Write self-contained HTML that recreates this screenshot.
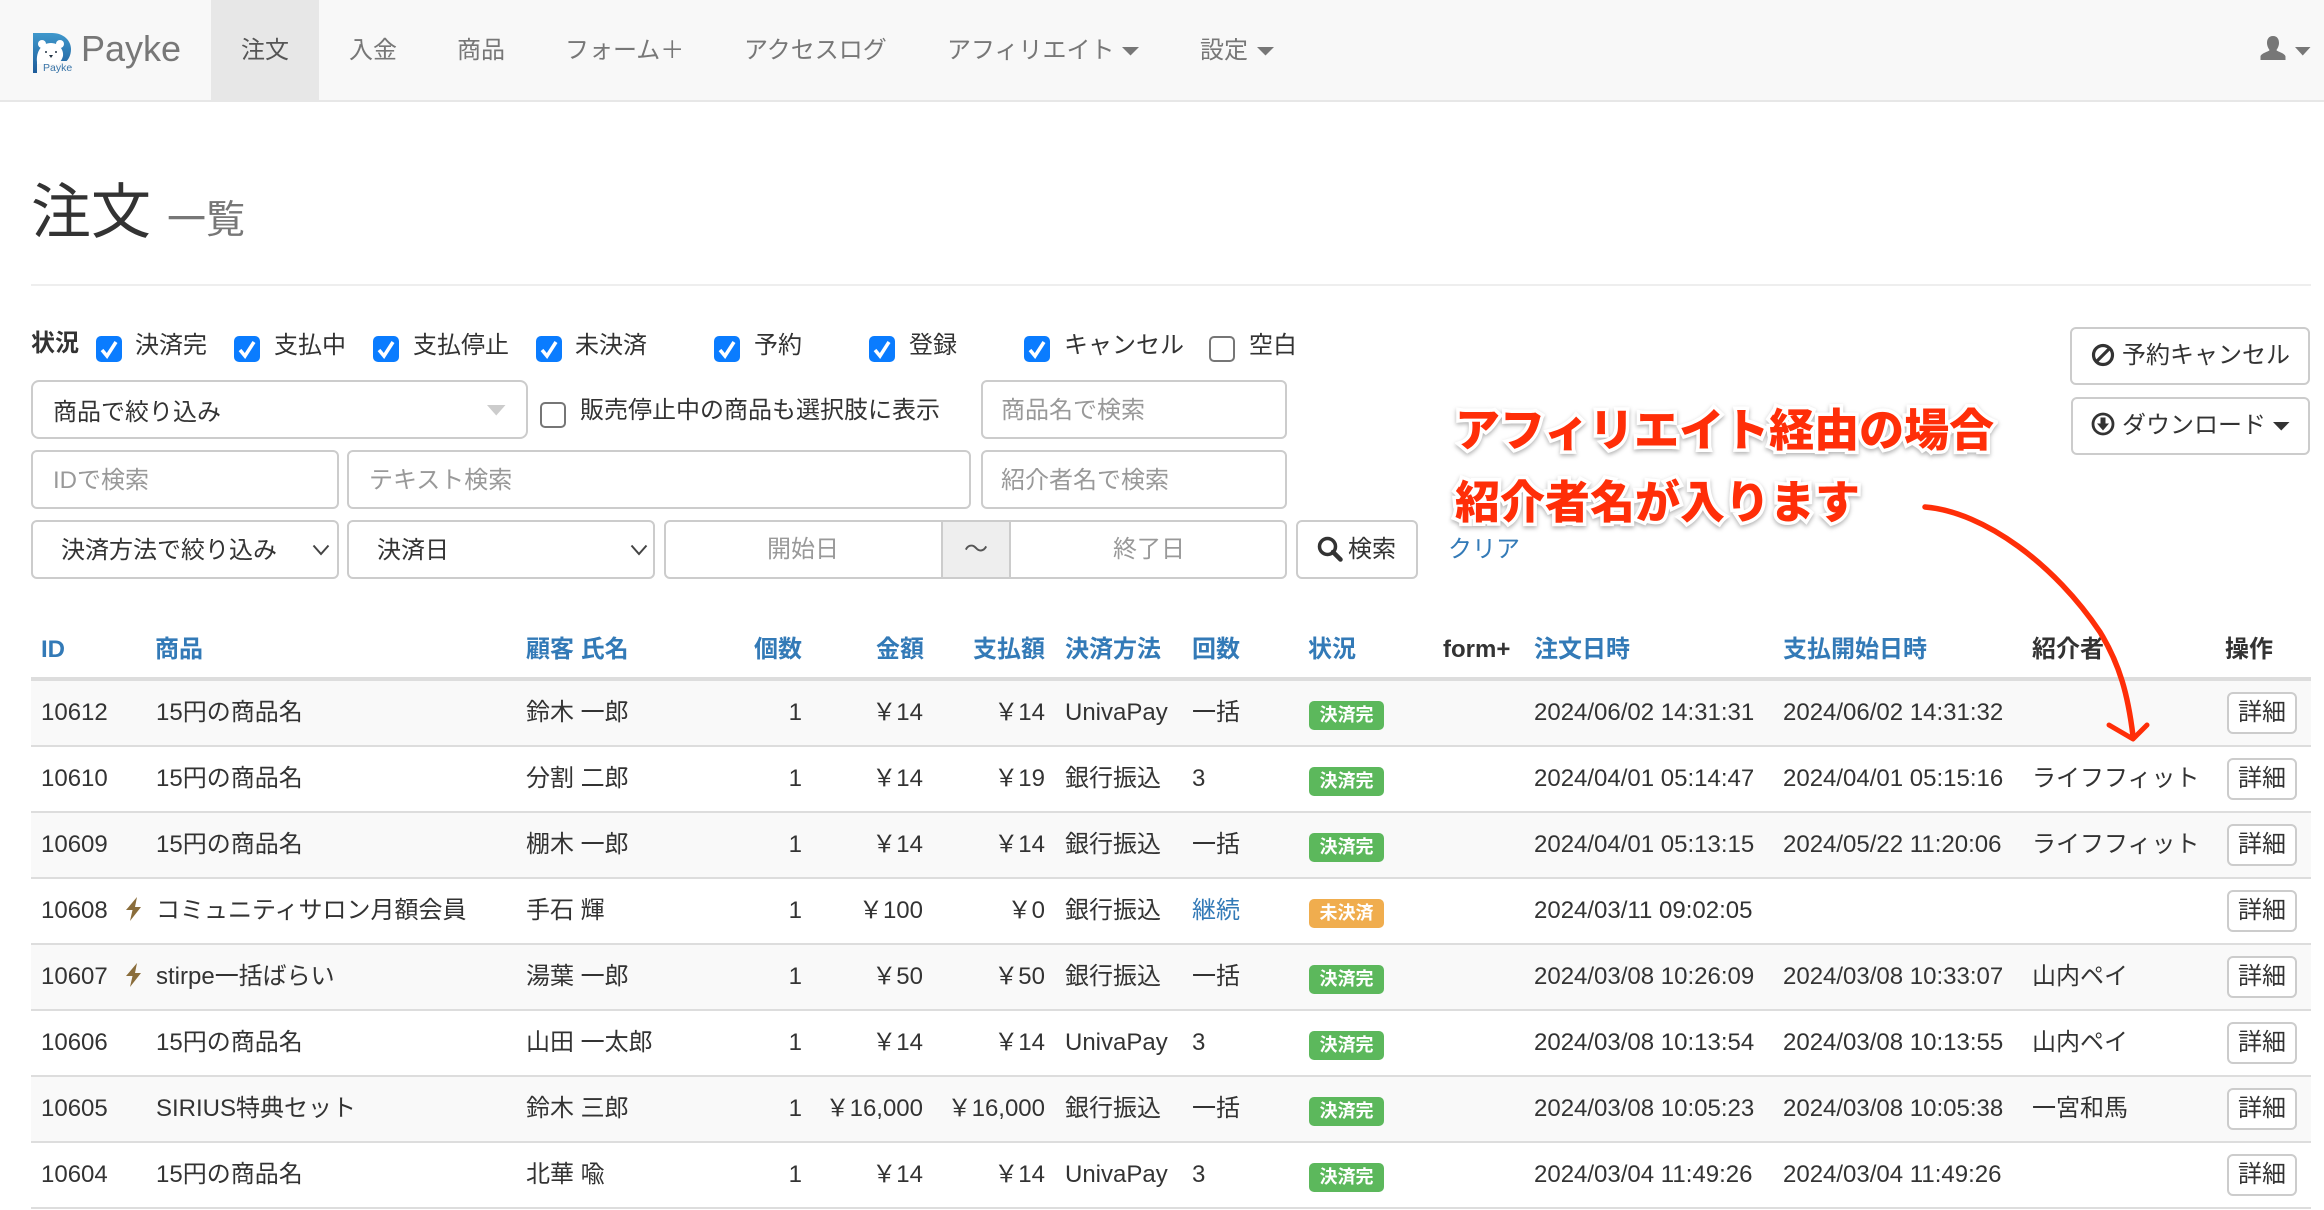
<!DOCTYPE html>
<html lang="ja">
<head>
<meta charset="utf-8">
<title>注文 一覧</title>
<style>
html,body{margin:0;padding:0;background:#fff}
body{width:2324px;height:1210px;position:relative;overflow:hidden;color:#333;font:24px/34px "Liberation Sans","Noto Sans CJK JP",sans-serif}
.t{position:absolute;white-space:nowrap;line-height:34px;margin:2px 0 0 -1px}
.b{position:absolute;box-sizing:border-box;border:2px solid #ccc;background:#fff;border-radius:6px}
.ph{color:#999}
.nav{position:absolute;left:0;top:0;width:2324px;height:102px;box-sizing:border-box;background:#f8f8f8;border-bottom:2px solid #e7e7e7}
.nav .t{color:#777;top:32px}
.th{font-weight:700;color:#337ab7;top:631px}
.th.k{color:#333}
.lb{top:327px;color:#333}
.cb{position:absolute;width:26px;height:26px;border-radius:5px;box-sizing:border-box}
.cb.on{background:#0a7cff}
.cb.off{background:#fff;border:2px solid #767676}
.cb svg{position:absolute;left:0;top:0}
.r{position:absolute;left:31px;width:2280px;height:64px;border-bottom:2px solid #ddd;box-sizing:content-box}
.r.s{background:#f9f9f9}
.r span{position:absolute;top:0;line-height:63px;white-space:nowrap}
.c1{left:10px}.c2{left:125px}.c3{left:495px}
.c4{right:1509px}.c5{right:1388px}.c6{right:1266px}
.c7{left:1034px}.c8{left:1161px}
.c10{left:1503px}.c11{left:1752px}.c12{left:2001px}
.r span.bd{left:1278px;top:20px;width:75px;height:29px;line-height:29px;border-radius:5px;background:#5cb85c;color:#fff;font-size:18px;font-weight:700;text-align:center}
.r span.bd.w{background:#f0ad4e}
.r span.dt{left:2196px;top:11px;width:70px;height:42px;line-height:38px;box-sizing:border-box;border:2px solid #ccc;border-radius:6px;background:#fff;text-align:center}
.bolt{position:absolute;left:94px;top:18px}
.note{position:absolute;left:1455px;white-space:nowrap;font:900 45px/60px "Liberation Sans","Noto Sans CJK JP",sans-serif;color:#ff2e08;-webkit-text-stroke:7px #fff;paint-order:stroke fill;filter:drop-shadow(0 2px 2px rgba(0,0,0,.3))}
</style>
</head>
<body>

<div class="nav">
  <div style="position:absolute;left:211px;top:0;width:108px;height:100px;background:#e7e7e7"></div>
  <svg style="position:absolute;left:33px;top:33px" width="39" height="41" viewBox="0 0 39 41">
    <defs><linearGradient id="g" x1="0" y1="0" x2="0" y2="1"><stop offset="0" stop-color="#3f98cc"/><stop offset="1" stop-color="#1e5c9a"/></linearGradient></defs>
    <path d="M0 0H19C31 0 38 8 38 16C38 23 35 28 30 31H4V40L0 40Z" fill="url(#g)"/>
    <path d="M4 28H38V40H4Z" fill="#f8f8f8"/>
    <circle cx="9" cy="11" r="4" fill="#fff"/><circle cx="27" cy="11" r="4" fill="#fff"/>
    <path d="M4 29C3 18 9 10 18 10C26 10 31 17 30 23C29 27 27 29 25 31H4Z" fill="#fff"/>
    <circle cx="13" cy="19" r="1" fill="#234"/><circle cx="23" cy="19" r="1" fill="#234"/>
    <path d="M16 22H20L18 25Z" fill="#234"/>
    <text x="10" y="38" font-size="10.5" fill="#3a75a8" font-family="Liberation Sans">Payke</text>
  </svg>
  <div class="t" style="left:82px;top:29px;font-size:36px;line-height:36px;color:#777">Payke</div>
  <div class="t" style="left:242px;color:#555">注文</div>
  <div class="t" style="left:350px">入金</div>
  <div class="t" style="left:458px">商品</div>
  <div class="t" style="left:566px">フォーム＋</div>
  <div class="t" style="left:745px">アクセスログ</div>
  <div class="t" style="left:948px">アフィリエイト</div>
  <svg style="position:absolute;left:1122px;top:47px" width="18" height="9"><path d="M0 0H17L8.500 8.500Z" fill="#777"/></svg>
  <div class="t" style="left:1201px">設定</div>
  <svg style="position:absolute;left:1257px;top:47px" width="18" height="9"><path d="M0 0H17L8.500 8.500Z" fill="#777"/></svg>
  <svg style="position:absolute;left:2260px;top:36px" width="26" height="24" viewBox="0 0 26 24"><path d="M13 0C8.500 0 7 3.500 7 7C7 10 8.500 12.500 9.500 14C9.500 15.500 1 17 0.500 20.500V24H25.500V20.500C25 17 16.500 15.500 16.500 14C17.500 12.500 19 10 19 7C19 3.500 17.500 0 13 0Z" fill="#777"/></svg>
  <svg style="position:absolute;left:2295px;top:47px" width="16" height="9"><path d="M0 0H15.500L7.750 8.500Z" fill="#777"/></svg>
</div>

<div class="t" style="left:32px;top:177px;font-size:60px;line-height:68px;color:#333">注文</div>
<div class="t" style="left:168px;top:194px;font-size:39px;line-height:50px;color:#777">一覧</div>
<div style="position:absolute;left:31px;top:284px;width:2280px;height:2px;background:#eee"></div>

<div class="t" style="left:32px;top:325px;font-weight:700">状況</div>

<div class="cb on" style="left:96px;top:336px"><svg width="26" height="26"><path d="M6 14L11 20L20 6" fill="none" stroke="#fff" stroke-width="3.500"/></svg></div>
<div class="t lb" style="left:136px">決済完</div>
<div class="cb on" style="left:234px;top:336px"><svg width="26" height="26"><path d="M6 14L11 20L20 6" fill="none" stroke="#fff" stroke-width="3.500"/></svg></div>
<div class="t lb" style="left:275px">支払中</div>
<div class="cb on" style="left:373px;top:336px"><svg width="26" height="26"><path d="M6 14L11 20L20 6" fill="none" stroke="#fff" stroke-width="3.500"/></svg></div>
<div class="t lb" style="left:414px">支払停止</div>
<div class="cb on" style="left:536px;top:336px"><svg width="26" height="26"><path d="M6 14L11 20L20 6" fill="none" stroke="#fff" stroke-width="3.500"/></svg></div>
<div class="t lb" style="left:576px">未決済</div>
<div class="cb on" style="left:714px;top:336px"><svg width="26" height="26"><path d="M6 14L11 20L20 6" fill="none" stroke="#fff" stroke-width="3.500"/></svg></div>
<div class="t lb" style="left:755px">予約</div>
<div class="cb on" style="left:869px;top:336px"><svg width="26" height="26"><path d="M6 14L11 20L20 6" fill="none" stroke="#fff" stroke-width="3.500"/></svg></div>
<div class="t lb" style="left:910px">登録</div>
<div class="cb on" style="left:1024px;top:336px"><svg width="26" height="26"><path d="M6 14L11 20L20 6" fill="none" stroke="#fff" stroke-width="3.500"/></svg></div>
<div class="t lb" style="left:1065px">キャンセル</div>
<div class="cb off" style="left:1209px;top:336px"></div>
<div class="t lb" style="left:1250px">空白</div>

<!-- row 1 -->
<div class="b" style="left:31px;top:380px;width:497px;height:59px;border-radius:8px"></div>
<div class="t" style="left:54px;top:394px">商品で絞り込み</div>
<svg style="position:absolute;left:487px;top:405px" width="19" height="11"><path d="M0 0H18.500L9.250 10.500Z" fill="#ccc"/></svg>
<div class="cb off" style="left:540px;top:402px"></div>
<div class="t" style="left:581px;top:392px">販売停止中の商品も選択肢に表示</div>
<div class="b" style="left:981px;top:380px;width:306px;height:59px"></div>
<div class="t ph" style="left:1002px;top:392px">商品名で検索</div>

<!-- row 2 -->
<div class="b" style="left:31px;top:450px;width:308px;height:59px"></div>
<div class="t ph" style="left:54px;top:462px">IDで検索</div>
<div class="b" style="left:347px;top:450px;width:624px;height:59px"></div>
<div class="t ph" style="left:370px;top:462px">テキスト検索</div>
<div class="b" style="left:981px;top:450px;width:306px;height:59px"></div>
<div class="t ph" style="left:1002px;top:462px">紹介者名で検索</div>

<!-- row 3 -->
<div class="b" style="left:31px;top:520px;width:308px;height:59px"></div>
<div class="t" style="left:62px;top:532px">決済方法で絞り込み</div>
<svg style="position:absolute;left:312px;top:544px" width="18" height="12"><path d="M1.500 1.500L9 10L16.500 1.500" fill="none" stroke="#444" stroke-width="2"/></svg>
<div class="b" style="left:347px;top:520px;width:308px;height:59px"></div>
<div class="t" style="left:378px;top:532px">決済日</div>
<svg style="position:absolute;left:630px;top:544px" width="18" height="12"><path d="M1.500 1.500L9 10L16.500 1.500" fill="none" stroke="#444" stroke-width="2"/></svg>
<div class="b" style="left:664px;top:520px;width:623px;height:59px"></div>
<div style="position:absolute;left:941px;top:520px;width:70px;height:59px;box-sizing:border-box;background:#eee;border:2px solid #ccc"></div>
<div class="t ph" style="left:768px;top:531px">開始日</div>
<div class="t" style="left:965px;top:531px;color:#555">〜</div>
<div class="t ph" style="left:1114px;top:531px">終了日</div>
<div class="b" style="left:1296px;top:520px;width:122px;height:59px"></div>
<svg style="position:absolute;left:1317px;top:536px" width="26" height="26" viewBox="0 0 26 26"><circle cx="10.500" cy="10.500" r="8" fill="none" stroke="#333" stroke-width="3.500"/><path d="M16 16L23.500 23.500" stroke="#333" stroke-width="4.500" stroke-linecap="round"/></svg>
<div class="t" style="left:1349px;top:531px">検索</div>
<div class="t" style="left:1449px;top:531px;color:#337ab7">クリア</div>

<!-- right buttons -->
<div class="b" style="left:2070px;top:327px;width:240px;height:58px"></div>
<svg style="position:absolute;left:2091px;top:343px" width="24" height="24" viewBox="0 0 24 24"><circle cx="12" cy="12" r="9.500" fill="none" stroke="#333" stroke-width="3.200"/><path d="M5.500 18.500L18.500 5.500" stroke="#333" stroke-width="3.200"/></svg>
<div class="t" style="left:2123px;top:337px">予約キャンセル</div>
<div class="b" style="left:2071px;top:397px;width:239px;height:58px"></div>
<svg style="position:absolute;left:2091px;top:412px" width="24" height="24" viewBox="0 0 24 24"><circle cx="12" cy="12" r="10" fill="none" stroke="#333" stroke-width="2.800"/><path d="M9.500 5.500H14.500V11.500H18L12 18.500L6 11.500H9.500Z" fill="#333"/></svg>
<div class="t" style="left:2123px;top:407px">ダウンロード</div>
<svg style="position:absolute;left:2273px;top:422px" width="17" height="9"><path d="M0 0H16.500L8.250 8.500Z" fill="#333"/></svg>

<!-- table header -->
<div class="t th" style="left:42px">ID</div>
<div class="t th" style="left:156px">商品</div>
<div class="t th" style="left:527px">顧客 氏名</div>
<div class="t th" style="right:1522px">個数</div>
<div class="t th" style="right:1400px">金額</div>
<div class="t th" style="right:1279px">支払額</div>
<div class="t th" style="left:1066px">決済方法</div>
<div class="t th" style="left:1193px">回数</div>
<div class="t th" style="left:1309px">状況</div>
<div class="t th k" style="left:1444px">form+</div>
<div class="t th" style="left:1535px">注文日時</div>
<div class="t th" style="left:1784px">支払開始日時</div>
<div class="t th k" style="left:2033px">紹介者</div>
<div class="t th k" style="left:2226px">操作</div>
<div style="position:absolute;left:31px;top:677px;width:2280px;height:4px;background:#ddd"></div>

<div class="r s" style="top:681px"><span class="c1">10612</span><span class="c2">15円の商品名</span><span class="c3">鈴木 一郎</span><span class="c4">1</span><span class="c5">￥14</span><span class="c6">￥14</span><span class="c7">UnivaPay</span><span class="c8">一括</span><span class="bd">決済完</span><span class="c10">2024/06/02 14:31:31</span><span class="c11">2024/06/02 14:31:32</span><span class="dt">詳細</span></div>
<div class="r" style="top:747px"><span class="c1">10610</span><span class="c2">15円の商品名</span><span class="c3">分割 二郎</span><span class="c4">1</span><span class="c5">￥14</span><span class="c6">￥19</span><span class="c7">銀行振込</span><span class="c8">3</span><span class="bd">決済完</span><span class="c10">2024/04/01 05:14:47</span><span class="c11">2024/04/01 05:15:16</span><span class="c12">ライフフィット</span><span class="dt">詳細</span></div>
<div class="r s" style="top:813px"><span class="c1">10609</span><span class="c2">15円の商品名</span><span class="c3">棚木 一郎</span><span class="c4">1</span><span class="c5">￥14</span><span class="c6">￥14</span><span class="c7">銀行振込</span><span class="c8">一括</span><span class="bd">決済完</span><span class="c10">2024/04/01 05:13:15</span><span class="c11">2024/05/22 11:20:06</span><span class="c12">ライフフィット</span><span class="dt">詳細</span></div>
<div class="r" style="top:879px"><span class="c1">10608</span><svg class="bolt" width="17" height="24" viewBox="0 0 17 24"><path d="M12 0L1 13H7.500L5 24L16 10H10Z" fill="#8a6d3b"/></svg><span class="c2">コミュニティサロン月額会員</span><span class="c3">手石 輝</span><span class="c4">1</span><span class="c5">￥100</span><span class="c6">￥0</span><span class="c7">銀行振込</span><span class="c8" style="color:#337ab7">継続</span><span class="bd w">未決済</span><span class="c10">2024/03/11 09:02:05</span><span class="dt">詳細</span></div>
<div class="r s" style="top:945px"><span class="c1">10607</span><svg class="bolt" width="17" height="24" viewBox="0 0 17 24"><path d="M12 0L1 13H7.500L5 24L16 10H10Z" fill="#8a6d3b"/></svg><span class="c2">stirpe一括ばらい</span><span class="c3">湯葉 一郎</span><span class="c4">1</span><span class="c5">￥50</span><span class="c6">￥50</span><span class="c7">銀行振込</span><span class="c8">一括</span><span class="bd">決済完</span><span class="c10">2024/03/08 10:26:09</span><span class="c11">2024/03/08 10:33:07</span><span class="c12">山内ペイ</span><span class="dt">詳細</span></div>
<div class="r" style="top:1011px"><span class="c1">10606</span><span class="c2">15円の商品名</span><span class="c3">山田 一太郎</span><span class="c4">1</span><span class="c5">￥14</span><span class="c6">￥14</span><span class="c7">UnivaPay</span><span class="c8">3</span><span class="bd">決済完</span><span class="c10">2024/03/08 10:13:54</span><span class="c11">2024/03/08 10:13:55</span><span class="c12">山内ペイ</span><span class="dt">詳細</span></div>
<div class="r s" style="top:1077px"><span class="c1">10605</span><span class="c2">SIRIUS特典セット</span><span class="c3">鈴木 三郎</span><span class="c4">1</span><span class="c5">￥16,000</span><span class="c6">￥16,000</span><span class="c7">銀行振込</span><span class="c8">一括</span><span class="bd">決済完</span><span class="c10">2024/03/08 10:05:23</span><span class="c11">2024/03/08 10:05:38</span><span class="c12">一宮和馬</span><span class="dt">詳細</span></div>
<div class="r" style="top:1143px"><span class="c1">10604</span><span class="c2">15円の商品名</span><span class="c3">北華 喩</span><span class="c4">1</span><span class="c5">￥14</span><span class="c6">￥14</span><span class="c7">UnivaPay</span><span class="c8">3</span><span class="bd">決済完</span><span class="c10">2024/03/04 11:49:26</span><span class="c11">2024/03/04 11:49:26</span><span class="dt">詳細</span></div>

<!-- annotation -->
<div class="note" style="top:401px">アフィリエイト経由の場合</div>
<div class="note" style="top:473px">紹介者名が入ります</div>
<svg style="position:absolute;left:0;top:0;pointer-events:none" width="2324" height="1210">
  <path d="M1925 507C1985 512 2055 565 2100 632C2120 665 2128 695 2133 736" fill="none" stroke="#ff2e08" stroke-width="5.500" stroke-linecap="round"/>
  <path d="M2109 725L2133 739L2147 725" fill="none" stroke="#ff2e08" stroke-width="5" stroke-linecap="round" stroke-linejoin="round"/>
</svg>
</body>
</html>
